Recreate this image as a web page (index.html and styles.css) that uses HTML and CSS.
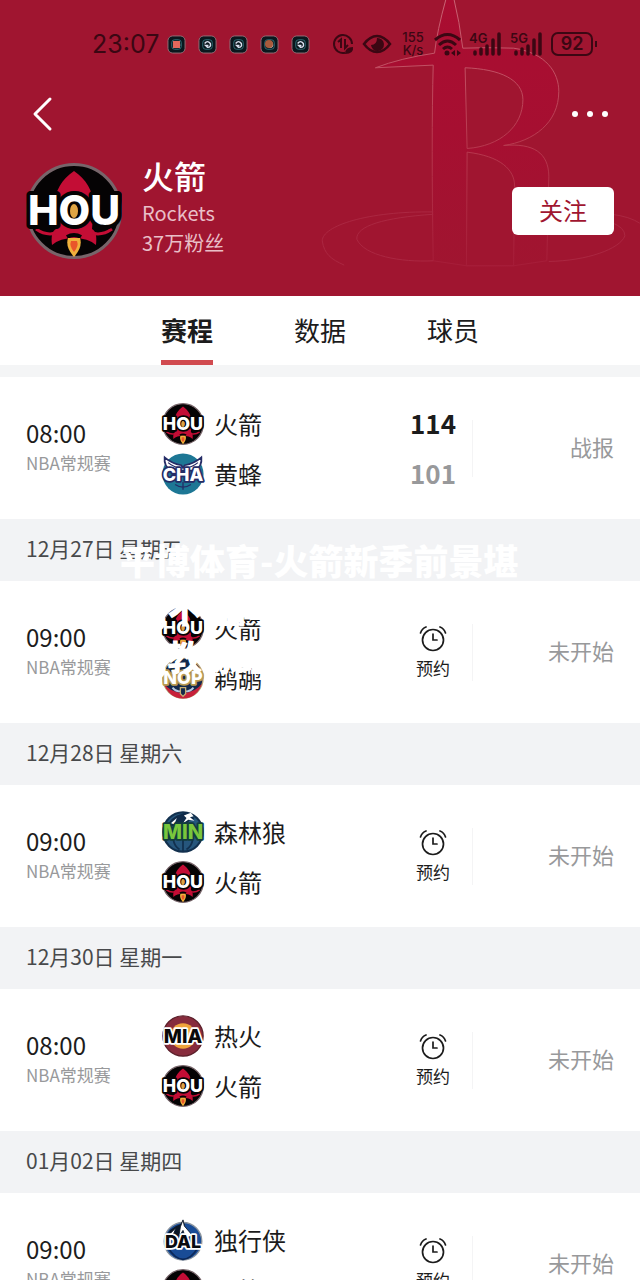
FILE: index.html
```html
<!DOCTYPE html>
<html lang="zh-CN">
<head>
    <meta charset="UTF-8">
    <meta name="viewport" content="width=device-width, initial-scale=1">
    <title>火箭</title>
    <link rel="stylesheet" href="styles.css">
</head>
<body>
<!-- shared icons -->
<svg class="defs" aria-hidden="true">
    <symbol id="hou" viewBox="0 0 96 96">
        <circle cx="48" cy="48" r="46.500" fill="#050304" stroke="#77656a" stroke-width="3"/>
        <path d="M48 8C36 16 29 28 28 42L30 66C26 68 25 74 26 82Q34 75 48 75Q62 75 70 82C71 74 70 68 66 66L68 42C67 28 60 16 48 8Z" fill="#c30d35"/>
        <path d="M10 66Q20 73 30 70M86 66Q76 73 66 70" fill="none" stroke="#c30d35" stroke-width="3"/>
        <path d="M41 74Q48 70 55 74" fill="none" stroke="#050304" stroke-width="4"/>
        <path d="M42 75H54Q57 84 48 94Q39 84 42 75Z" fill="#f0b13c"/>
        <path d="M45 78H51Q53 83 48 89Q43 83 45 78Z" fill="#e9562a"/>
    </symbol>
    <symbol id="cha" viewBox="0 0 96 96">
        <circle cx="48" cy="48" r="47" fill="#1d7795"/>
        <path d="M6 10Q22 24 44 28L48 34L52 28Q74 24 90 10Q92 30 76 40H20Q4 30 6 10Z" fill="#fff" stroke="#252c66" stroke-width="4"/>
        <path d="M14 22Q28 34 44 34M82 22Q68 34 52 34M48 66V84M30 72Q48 84 66 72" fill="none" stroke="#252c66" stroke-width="3"/>
    </symbol>
    <symbol id="nop" viewBox="0 0 96 96">
        <circle cx="48" cy="48" r="46" fill="#13294b" stroke="#b8a374" stroke-width="3"/>
        <path d="M4 60Q16 94 48 95Q80 94 92 60Q76 82 48 82Q20 82 4 60Z" fill="#c7203a"/>
        <path d="M24 70Q34 83 48 76Q62 83 72 70" fill="none" stroke="#b5c7e0" stroke-width="4"/>
        <path d="M42 70H54V84L48 90L42 84Z" fill="#13294b" stroke="#c7ad72" stroke-width="3"/>
    </symbol>
    <symbol id="min" viewBox="0 0 96 96">
        <circle cx="48" cy="48" r="45" fill="#26567c" stroke="#12304e" stroke-width="5"/>
        <path d="M10 38Q20 12 46 6L54 2L58 10Q70 8 74 18L62 22L56 34H10Z" fill="#102b49"/>
        <path d="M50 10L66 4L72 12L64 14L74 22L60 20L48 28L56 16ZM20 28L34 16L28 30Z" fill="#fff"/>
        <path d="M48 66V92M26 66Q28 80 40 88M70 66Q68 80 56 88" fill="none" stroke="#12304e" stroke-width="4"/>
    </symbol>
    <symbol id="mia" viewBox="0 0 96 96">
        <circle cx="48" cy="48" r="46" fill="#872c3d" stroke="#5c202b" stroke-width="3"/>
        <circle cx="48" cy="48" r="29" fill="#efa43b"/>
        <circle cx="48" cy="48" r="16" fill="#f5c566"/>
    </symbol>
    <symbol id="dal" viewBox="0 0 96 96">
        <circle cx="48" cy="51" r="43" fill="#194c96" stroke="#8b949e" stroke-width="3"/>
        <path d="M8 46Q14 20 42 12L48 2L52 14L46 36Z" fill="#0b1728"/>
        <path d="M48 2L51 16L70 38L54 44L48 26L38 42L42 18ZM16 36L32 20L24 40Z" fill="#fff" stroke="#0b1728" stroke-width="2"/>
        <path d="M14 66Q30 92 48 92Q66 92 82 66" fill="none" stroke="#0c2857" stroke-width="4"/>
    </symbol>
    <symbol id="alarm" viewBox="0 0 28 28">
        <g fill="none" stroke="#1c1c1c" stroke-width="1.700" stroke-linecap="round">
            <circle cx="14" cy="15" r="10.500"/>
            <path d="M14 9V15H18M1.500 8Q3 3.500 7 2M26.500 8Q25 3.500 21 2"/>
        </g>
    </symbol>
    <symbol id="app" viewBox="0 0 20 20">
        <rect x="1" y="1" width="18" height="18" rx="5" fill="#0a171d" stroke="#957078"/>
        <rect x="5" y="5" width="10" height="10" rx="3" fill="none" stroke="#307078"/>
        <path d="M7 9Q10 5 13 9Q14 13 10 13L8 11H11" fill="none" stroke="#d9e0ee" stroke-width="1.500"/>
    </symbol>
    <symbol id="bars" viewBox="0 0 33 26">
        <path d="M6 21V23M12 18V23M18 15V23M24 9V23M30 3V23" stroke="#3b0713" stroke-width="3.500" stroke-linecap="round"/>
    </symbol>
</svg>

<div class="page">
    <header class="header">
        <svg class="header-art" viewBox="0 0 1020 891" aria-hidden="true">
            <defs>
                <linearGradient id="fade" x1="0" y1="0" x2="0" y2="1">
                    <stop offset="0" stop-color="#aa0d31"/>
                    <stop offset="0.500" stop-color="#a60f31"/>
                    <stop offset="1" stop-color="#a01530"/>
                </linearGradient>
                <linearGradient id="line" gradientUnits="userSpaceOnUse" x1="0" y1="0" x2="0" y2="820">
                    <stop offset="0" stop-color="#ca6475"/>
                    <stop offset="0.500" stop-color="#b83a50"/>
                    <stop offset="1" stop-color="#a51b37"/>
                </linearGradient>
            </defs>
            <path fill="url(#fade)" fill-rule="evenodd" stroke="url(#line)" stroke-width="3" d="M437 -5Q409 95 402 160Q300 175 224 204L398 196Q392 420 398 785L498 800H640L740 785L746 530C745 460 700 430 610 438C700 425 776 370 776 275C776 220 740 160 640 145Q560 142 487 145Q477 65 460 -5ZM494 204C600 208 668 240 668 300C668 380 600 440 500 447ZM500 458C600 470 643 510 643 560L640 800H498Z"/>
            <path fill="none" stroke="#ab2741" stroke-width="3" d="M398 638C200 635 64 680 64 725C70 765 90 780 130 798M398 645C250 655 165 680 168 720C190 770 300 790 398 785M935 645Q990 652 1020 672M935 670Q975 685 975 710C960 750 860 785 746 787"/>
        </svg>

        <div class="status-bar">
            <div class="status-group">
                <span class="clock">23:07</span>
                <div class="apps">
                    <svg class="app"><use href="#app"/><rect x="6" y="6" width="7" height="7" fill="#e2685c"/></svg>
                    <svg class="app"><use href="#app"/></svg>
                    <svg class="app"><use href="#app"/></svg>
                    <svg class="app"><use href="#app"/><circle cx="9" cy="9" r="4" fill="#a85b3c"/></svg>
                    <svg class="app"><use href="#app"/></svg>
                </div>
            </div>
            <div class="status-group">
                <svg width="22" height="24" viewBox="0 0 22 24" fill="none" stroke="#3b0713" stroke-width="2">
                    <path d="M20 12A9 9 0 1 0 13 20.800M6 10L9 7.500V16M13 7V16L16 13"/>
                    <path d="M13 22Q13 15 21 15Q22 22 13 22Z" fill="#3b0713" stroke="none"/>
                </svg>
                <svg width="30" height="24" viewBox="0 0 30 24">
                    <path d="M2 12Q8 4 15 4T28 12Q22 20 15 20T2 12Z" fill="none" stroke="#3b0713" stroke-width="2.500"/>
                    <path d="M15 6A6.500 6.500 0 1 1 9 13Q15 13 15 6Z" fill="#3b0713"/>
                </svg>
                <span class="speed">155<br>K/s</span>
                <svg width="27" height="26" viewBox="0 0 27 26" fill="none" stroke="#3b0713" stroke-width="3">
                    <path d="M1 9Q13.500 -2 26 9M5 14Q13.500 6 22 14M9 18Q13.500 14 18 18"/>
                    <circle cx="13" cy="22" r="2.500" fill="#3b0713" stroke="none"/>
                    <path d="M21 19V25L17 22ZM23 19V25L27 22Z" fill="#3b0713" stroke="none"/>
                </svg>
                <div class="signal"><svg><use href="#bars"/></svg><span>4G</span></div>
                <div class="signal"><svg><use href="#bars"/></svg><span>5G</span></div>
                <div class="battery">92</div>
            </div>
        </div>

        <nav class="nav">
            <button class="icon-btn" aria-label="返回">
                <svg width="22" height="36" viewBox="0 0 22 36"><path d="M18 3L3 18L18 33" fill="none" stroke="#fff" stroke-width="3" stroke-linecap="round" stroke-linejoin="round"/></svg>
            </button>
            <button class="icon-btn" aria-label="更多">
                <svg width="36" height="8" viewBox="0 0 36 8" fill="#fff"><circle cx="3" cy="4" r="3"/><circle cx="18" cy="4" r="3"/><circle cx="33" cy="4" r="3"/></svg>
            </button>
        </nav>

        <div class="profile">
            <svg class="profile-logo" viewBox="0 0 96 96"><use href="#hou"/><text x="48" y="62" class="badge-text hou">HOU</text><ellipse cx="48" cy="48" rx="4" ry="7" fill="#dfa544"/></svg>
            <div class="profile-info">
                <h1>火箭</h1>
                <p>Rockets</p>
                <p>37万粉丝</p>
            </div>
            <button class="follow">关注</button>
        </div>
    </header>

    <nav class="tabs">
        <button class="tab active">赛程</button>
        <button class="tab">数据</button>
        <button class="tab">球员</button>
    </nav>

    <main class="schedule">
        <section class="match">
            <div class="when"><time>08:00</time><span>NBA常规赛</span></div>
            <div class="teams">
                <div class="team"><svg viewBox="0 0 96 96"><use href="#hou"/><text x="48" y="62" class="badge-text hou">HOU</text><ellipse cx="48" cy="48" rx="4" ry="7" fill="#dfa544"/></svg>火箭</div>
                <div class="team"><svg viewBox="0 0 96 96"><use href="#cha"/><text x="48" y="63" class="badge-text cha">CHA</text></svg>黄蜂</div>
            </div>
            <div class="score"><b>114</b><b class="lost">101</b></div>
            <a class="state" href="#">战报</a>
        </section>

        <h2 class="date">12月27日 星期五</h2>
        <section class="match">
            <div class="when"><time>09:00</time><span>NBA常规赛</span></div>
            <div class="teams">
                <div class="team"><svg viewBox="0 0 96 96"><use href="#hou"/><text x="48" y="62" class="badge-text hou">HOU</text><ellipse cx="48" cy="48" rx="4" ry="7" fill="#dfa544"/></svg>火箭</div>
                <div class="team"><svg viewBox="0 0 96 96"><use href="#nop"/><text x="48" y="62" class="badge-text nop">NOP</text></svg>鹈鹕</div>
            </div>
            <button class="remind"><svg><use href="#alarm"/></svg>预约</button>
            <div class="state">未开始</div>
        </section>

        <h2 class="date">12月28日 星期六</h2>
        <section class="match">
            <div class="when"><time>09:00</time><span>NBA常规赛</span></div>
            <div class="teams">
                <div class="team"><svg viewBox="0 0 96 96"><use href="#min"/><text x="48" y="64" class="badge-text min">MIN</text></svg>森林狼</div>
                <div class="team"><svg viewBox="0 0 96 96"><use href="#hou"/><text x="48" y="62" class="badge-text hou">HOU</text><ellipse cx="48" cy="48" rx="4" ry="7" fill="#dfa544"/></svg>火箭</div>
            </div>
            <button class="remind"><svg><use href="#alarm"/></svg>预约</button>
            <div class="state">未开始</div>
        </section>

        <h2 class="date">12月30日 星期一</h2>
        <section class="match">
            <div class="when"><time>08:00</time><span>NBA常规赛</span></div>
            <div class="teams">
                <div class="team"><svg viewBox="0 0 96 96"><use href="#mia"/><text x="48" y="63" class="badge-text mia">MIA</text></svg>热火</div>
                <div class="team"><svg viewBox="0 0 96 96"><use href="#hou"/><text x="48" y="62" class="badge-text hou">HOU</text><ellipse cx="48" cy="48" rx="4" ry="7" fill="#dfa544"/></svg>火箭</div>
            </div>
            <button class="remind"><svg><use href="#alarm"/></svg>预约</button>
            <div class="state">未开始</div>
        </section>

        <h2 class="date">01月02日 星期四</h2>
        <section class="match">
            <div class="when"><time>09:00</time><span>NBA常规赛</span></div>
            <div class="teams">
                <div class="team"><svg viewBox="0 0 96 96"><use href="#dal"/><text x="48" y="67" class="badge-text dal">DAL</text></svg>独行侠</div>
                <div class="team"><svg viewBox="0 0 96 96"><use href="#hou"/><text x="48" y="62" class="badge-text hou">HOU</text><ellipse cx="48" cy="48" rx="4" ry="7" fill="#dfa544"/></svg>火箭</div>
            </div>
            <button class="remind"><svg><use href="#alarm"/></svg>预约</button>
            <div class="state">未开始</div>
        </section>
    </main>

    <div class="caption">平博体育-火箭新季前景堪<br>忧,不佳阵<br>容,教练组</div>
</div>
</body>
</html>
```
FILE: styles.css
```css
* {
    box-sizing: border-box;
}

body {
    margin: 0;
    font-family: "Noto Sans CJK SC", "Noto Sans", sans-serif;
    color: #1c1c1c;
    background: #fff;
}

h1, h2, p {
    margin: 0;
    font-weight: 400;
}

button {
    padding: 0;
    border: 0;
    background: none;
    font-family: inherit;
    color: inherit;
    cursor: pointer;
}

svg {
    display: block;
    flex: none;
}

.defs {
    position: absolute;
    width: 0;
    height: 0;
}

/* team badges */
.badge-text {
    font-family: Inter, sans-serif;
    font-size: 41px;
    font-weight: 800;
    text-anchor: middle;
    paint-order: stroke;
    stroke-linejoin: round;
    stroke-width: 8px;
    fill: #fff;
}

.hou {
    stroke: #050304;
}

.cha {
    stroke: #252c66;
}

.nop {
    stroke: #b99a52;
}

.min {
    fill: #79c63c;
    stroke: #123c3d;
    font-size: 46px;
}

.mia {
    fill: #090909;
    stroke: #fff;
    font-size: 44px;
}

.dal {
    fill: #080b10;
    stroke: #fff;
}

.page {
    position: relative;
    display: flex;
    flex-direction: column;
    height: 100vh;
    overflow: hidden;
}

/* header */
.header {
    position: relative;
    flex: none;
    padding: 0 26px 34px;
    background: #a01530;
    color: #fff;
}

.header-art {
    position: absolute;
    top: 0;
    right: 0;
    height: 100%;
}

.status-bar, .nav, .profile {
    position: relative;
    display: flex;
    align-items: center;
    justify-content: space-between;
}

.status-bar {
    height: 88px;
    padding: 0 17px 0 66px;
    color: #3b0713;
    font-family: Inter, sans-serif;
}

.status-group, .apps {
    display: flex;
    align-items: center;
    gap: 8px;
}

.apps {
    gap: 12px;
}

.app {
    width: 19px;
    height: 19px;
}

.clock {
    font-size: 25px;
    line-height: 30px;
}

.speed {
    width: 26px;
    font-size: 13px;
    line-height: 13px;
    font-weight: 500;
    text-align: center;
}

.signal {
    position: relative;
}

.signal svg {
    width: 33px;
    height: 26px;
}

.signal span {
    position: absolute;
    top: 0;
    left: 0;
    font-size: 13px;
    line-height: 14px;
    font-weight: 600;
}

.battery {
    position: relative;
    width: 42px;
    margin-right: 4px;
    border: 2px solid #3b0713;
    border-radius: 7px;
    font-size: 18px;
    line-height: 20px;
    font-weight: 600;
    text-align: center;
}

.battery::after {
    content: "";
    position: absolute;
    top: 7px;
    right: -6px;
    width: 2px;
    height: 6px;
    background: #3b0713;
}

.nav {
    height: 52px;
    padding: 0 4px;
}

.icon-btn {
    padding: 4px 2px;
}

.profile {
    margin-top: 19px;
}

.profile-logo {
    width: 96px;
    height: 96px;
}

.profile-info {
    flex: 1;
    padding: 0 0 4px 20px;
    color: #e9bfc7;
    font-size: 20px;
    line-height: 30px;
}

.profile-info h1 {
    margin-bottom: 7px;
    color: #fff;
    font-size: 32px;
    line-height: 32px;
    font-weight: 500;
}

.follow {
    width: 102px;
    height: 48px;
    padding-bottom: 3px;
    border-radius: 6px;
    background: #fff;
    color: #a01530;
    font-size: 24px;
}

/* tabs */
.tabs {
    flex: none;
    display: flex;
    justify-content: center;
    gap: 81px;
    height: 69px;
}

.tab {
    padding-top: 3px;
    border-bottom: 5px solid transparent;
    font-size: 26px;
}

.tab.active {
    border-color: #d14b50;
    font-weight: 700;
}

/* schedule */
.schedule {
    flex: 1;
    min-height: 0;
    border-top: 12px solid #f4f5f6;
    overflow-y: auto;
    scrollbar-width: none;
}

.date {
    padding: 0 26px 4px;
    background: #f2f3f5;
    color: #48494b;
    font-size: 21px;
    line-height: 58px;
}

.match {
    display: grid;
    grid-template-columns: 136px 1fr 78px 142px;
    align-items: center;
    height: 142px;
    padding: 0 26px;
}

.when {
    display: flex;
    flex-direction: column;
    font-size: 17px;
    line-height: 30px;
    color: #98999b;
}

.when time {
    color: #1c1c1c;
    font-size: 24px;
}

.teams {
    display: flex;
    flex-direction: column;
    gap: 8px;
    padding-top: 2px;
}

.team {
    display: flex;
    align-items: center;
    gap: 10px;
    font-size: 24px;
    line-height: 42px;
}

.team svg {
    width: 42px;
    height: 42px;
    overflow: visible;
}

.score {
    display: flex;
    flex-direction: column;
    text-align: center;
    font-family: "Noto Sans CJK SC", sans-serif;
    font-size: 26px;
    line-height: 50px;
}

.score b {
    font-weight: 700;
}

.score .lost {
    color: #98999b;
}

.remind {
    display: flex;
    flex-direction: column;
    align-items: center;
    gap: 4px;
    font-size: 17px;
    line-height: 22px;
}

.remind svg {
    width: 28px;
    height: 28px;
}

.state {
    padding-bottom: 5px;
    border-left: 1px solid #f4f4f5;
    color: #98999b;
    font-size: 22px;
    line-height: 52px;
    text-align: right;
    text-decoration: none;
}

/* headline laid over the list */
.caption {
    position: absolute;
    top: 536px;
    left: 50%;
    width: 400px;
    margin-left: -200px;
    color: #fff;
    font-size: 35px;
    line-height: 48px;
    font-weight: 900;
    white-space: nowrap;
    pointer-events: none;
}
```
